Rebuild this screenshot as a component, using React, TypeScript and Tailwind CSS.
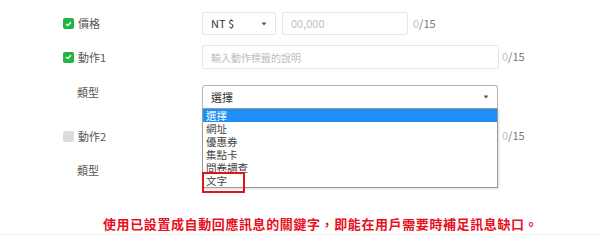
import React from 'react';

const Check: React.FC<{ on?: boolean }> = ({ on }) =>
	on ? (
		<span className="w-[11px] h-[11px] rounded-[2px] bg-[#1fb443] flex items-center justify-center">
			<svg width="7" height="6" viewBox="0 0 7 6">
				<path d="M1 3 L2.8 4.6 L6 1.2" stroke="#fff" strokeWidth="1.4" fill="none" />
			</svg>
		</span>
	) : (
		<span className="w-[11px] h-[11px] rounded-[2px] bg-[#dcdcdc]" />
	);

const Counter: React.FC = () => (
	<div className="text-[11px] leading-[14px] h-[14px] flex items-center -mt-[2px]">
		<span className="text-[#c4c4c4]">0</span>
		<span className="text-[#7a7a7a]">/15</span>
	</div>
);

const Caret: React.FC = () => (
	<svg width="6" height="4" viewBox="0 0 6 4">
		<path d="M0.5 0.5 L5.5 0.5 L3 3.5 Z" fill="#555" />
	</svg>
);

const options = ["選擇", "網址", "優惠券", "集點卡", "問卷調查", "文字"];

const App: React.FC = () => {
	return (
		<div
			className="w-[600px] h-[245px] bg-white flex flex-col relative overflow-hidden"
			style={{ fontFamily: '"Noto Sans CJK TC", "Noto Sans", sans-serif' }}
		>
			{/* 價格 */}
			<div className="flex items-center h-[23px] mt-[12px]">
				<div className="w-[202px] pl-[63px] flex items-center gap-[4px] text-[11px] text-[#555]">
					<Check on />
					<span>價格</span>
				</div>
				<div className="w-[74px] h-[23px] border border-[#e6e6e6] rounded-[2px] flex items-center justify-between pl-[8px] pr-[8px] text-[11px] text-[#333]">
					<span>NT $</span>
					<Caret />
				</div>
				<div className="ml-[6px] w-[126px] h-[23px] border border-[#e6e6e6] rounded-[2px] flex items-center pl-[8px] text-[11px] text-[#c0c0c0]">
					00,000
				</div>
				<div className="ml-[5px]">
					<Counter />
				</div>
			</div>

			{/* 動作1 */}
			<div className="flex items-center h-[24px] mt-[10px]">
				<div className="w-[202px] pl-[63px] flex items-center gap-[4px] text-[11px] text-[#555]">
					<Check on />
					<span>動作1</span>
				</div>
				<div className="w-[297px] h-[24px] border border-[#e6e6e6] rounded-[2px] flex items-center pl-[8px] text-[10px] text-[#bdbdbd]">
					輸入動作標籤的說明
				</div>
				<div className="ml-[3px]">
					<Counter />
				</div>
			</div>

			{/* 類型 + open select */}
			<div className="flex items-start mt-[16px] relative z-10">
				<div className="w-[202px] pl-[77px] text-[11px] leading-[14px] text-[#555]">類型</div>
				<div className="relative w-[296px]">
					<div className="h-[23px] border border-[#b5b5b5] border-b-0 rounded-t-[3px] flex items-center justify-between pl-[8px] pr-[8px] text-[11px] text-[#333] bg-white">
						<span>選擇</span>
						<Caret />
					</div>
					<div className="absolute left-0 top-full w-[296px] h-[80px] border border-[#9a9a9a] bg-white shadow-[1px_1px_2px_rgba(0,0,0,0.15)]">
						{options.map((o, i) => (
							<div
								key={o}
								className={
									i === 0
										? "h-[13px] leading-[13px] pl-[3px] text-[10.5px] bg-[#1e8ff7] text-white"
										: "h-[13px] leading-[13px] pl-[3px] text-[10.5px] text-[#444]"
								}
							>
								{o}
							</div>
						))}
					</div>
					<div className="absolute left-0 top-[87px] w-[43px] h-[21px] border-2 border-[#e0141e]" />
				</div>
			</div>

			{/* 動作2 */}
			<div className="flex items-center h-[16px] mt-[20px]">
				<div className="w-[202px] pl-[63px] flex items-center gap-[4px] text-[11px] text-[#555]">
					<Check />
					<span>動作2</span>
				</div>
				<div className="w-[297px]" />
				<div className="ml-[3px]">
					<Counter />
				</div>
			</div>

			{/* 類型 */}
			<div className="flex items-center h-[16px] mt-[18px]">
				<div className="pl-[77px] text-[11px] text-[#555]">類型</div>
			</div>

			<div className="mt-[38px] flex">
				<p className="pl-[103px] text-[13px] leading-[16px] font-bold tracking-[0.6px] text-[#e8101e]">
					使用已設置成自動回應訊息的關鍵字，即能在用戶需要時補足訊息缺口。
				</p>
			</div>
			<div className="mt-[2px] h-px bg-[#f0f0f0]" />
		</div>
	);
};

export default App;
